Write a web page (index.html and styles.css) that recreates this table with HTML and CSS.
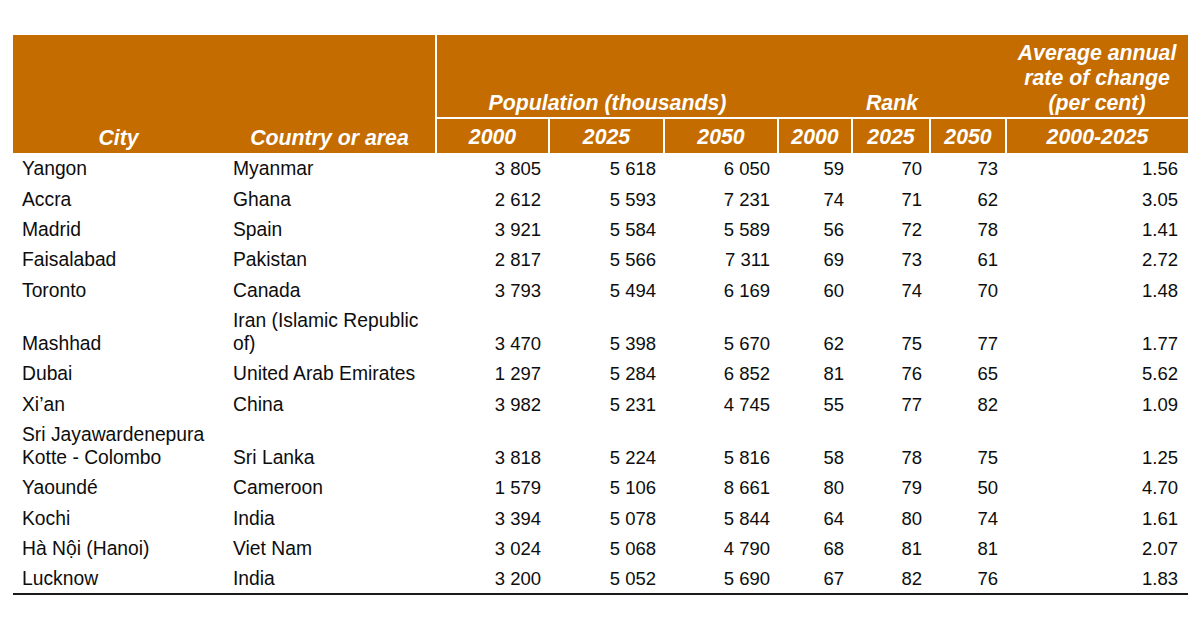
FILE: index.html
```html
<!DOCTYPE html>
<html lang="en">
<head>
<meta charset="utf-8">
<title>Cities</title>
<link rel="stylesheet" href="styles.css">
</head>
<body>
<div class="page">
<table class="data">
  <colgroup>
    <col class="c-city"><col class="c-country">
    <col class="c-pop1"><col class="c-pop2"><col class="c-pop3">
    <col class="c-rk1"><col class="c-rk2"><col class="c-rk3">
    <col class="c-rate">
  </colgroup>
  <thead>
    <tr class="h1">
      <th rowspan="2" class="hc">City</th>
      <th rowspan="2" class="hc">Country or area</th>
      <th colspan="3" class="sep">Population (thousands)</th>
      <th colspan="3">Rank</th>
      <th>Average annual<br>rate of change<br>(per cent)</th>
    </tr>
    <tr class="h2">
      <th class="sep">2000</th><th class="sep">2025</th><th class="sep">2050</th>
      <th class="sep">2000</th><th class="sep">2025</th><th class="sep">2050</th>
      <th class="sep">2000-2025</th>
    </tr>
  </thead>
  <tbody>
    <tr><td>Yangon</td><td>Myanmar</td><td class="n">3 805</td><td class="n">5 618</td><td class="n">6 050</td><td class="n">59</td><td class="n">70</td><td class="n">73</td><td class="n r">1.56</td></tr>
    <tr><td>Accra</td><td>Ghana</td><td class="n">2 612</td><td class="n">5 593</td><td class="n">7 231</td><td class="n">74</td><td class="n">71</td><td class="n">62</td><td class="n r">3.05</td></tr>
    <tr><td>Madrid</td><td>Spain</td><td class="n">3 921</td><td class="n">5 584</td><td class="n">5 589</td><td class="n">56</td><td class="n">72</td><td class="n">78</td><td class="n r">1.41</td></tr>
    <tr><td>Faisalabad</td><td>Pakistan</td><td class="n">2 817</td><td class="n">5 566</td><td class="n">7 311</td><td class="n">69</td><td class="n">73</td><td class="n">61</td><td class="n r">2.72</td></tr>
    <tr><td>Toronto</td><td>Canada</td><td class="n">3 793</td><td class="n">5 494</td><td class="n">6 169</td><td class="n">60</td><td class="n">74</td><td class="n">70</td><td class="n r">1.48</td></tr>
    <tr><td>Mashhad</td><td>Iran (Islamic Republic<br>of)</td><td class="n">3 470</td><td class="n">5 398</td><td class="n">5 670</td><td class="n">62</td><td class="n">75</td><td class="n">77</td><td class="n r">1.77</td></tr>
    <tr><td>Dubai</td><td>United Arab Emirates</td><td class="n">1 297</td><td class="n">5 284</td><td class="n">6 852</td><td class="n">81</td><td class="n">76</td><td class="n">65</td><td class="n r">5.62</td></tr>
    <tr><td>Xi’an</td><td>China</td><td class="n">3 982</td><td class="n">5 231</td><td class="n">4 745</td><td class="n">55</td><td class="n">77</td><td class="n">82</td><td class="n r">1.09</td></tr>
    <tr><td>Sri Jayawardenepura<br>Kotte - Colombo</td><td>Sri Lanka</td><td class="n">3 818</td><td class="n">5 224</td><td class="n">5 816</td><td class="n">58</td><td class="n">78</td><td class="n">75</td><td class="n r">1.25</td></tr>
    <tr><td>Yaoundé</td><td>Cameroon</td><td class="n">1 579</td><td class="n">5 106</td><td class="n">8 661</td><td class="n">80</td><td class="n">79</td><td class="n">50</td><td class="n r">4.70</td></tr>
    <tr><td>Kochi</td><td>India</td><td class="n">3 394</td><td class="n">5 078</td><td class="n">5 844</td><td class="n">64</td><td class="n">80</td><td class="n">74</td><td class="n r">1.61</td></tr>
    <tr><td>Hà Nội (Hanoi)</td><td>Viet Nam</td><td class="n">3 024</td><td class="n">5 068</td><td class="n">4 790</td><td class="n">68</td><td class="n">81</td><td class="n">81</td><td class="n r">2.07</td></tr>
    <tr class="last"><td>Lucknow</td><td>India</td><td class="n">3 200</td><td class="n">5 052</td><td class="n">5 690</td><td class="n">67</td><td class="n">82</td><td class="n">76</td><td class="n r">1.83</td></tr>
  </tbody>
</table>
</div>
</body>
</html>
```

FILE: styles.css
```css
html, body {
  margin: 0;
  padding: 0;
  background: #ffffff;
}
.page {
  padding: 35px 12px 0 13px;
  font-family: "Liberation Sans", Arial, sans-serif;
  color: #0d0d0d;
}
.data {
  width: 1175px;
  table-layout: fixed;
  border-collapse: collapse;
  border-spacing: 0;
}
.c-city { width: 211px; }
.c-country { width: 212px; }
.c-pop1 { width: 113px; }
.c-pop2 { width: 115px; }
.c-pop3 { width: 114px; }
.c-rk1 { width: 74px; }
.c-rk2 { width: 78px; }
.c-rk3 { width: 76px; }
.c-rate { width: 182px; }

.data th {
  background: #c46c00;
  color: #ffffff;
  font-weight: bold;
  font-style: italic;
  font-size: 21.3px;
  line-height: 25px;
  text-align: center;
  vertical-align: bottom;
  padding: 0 4px;
}
.h1 th {
  height: 82px;
  padding-top: 6px;
  padding-bottom: 1px;
  box-sizing: border-box;
}
.h1 th.hc {
  padding-bottom: 2px;
}
.h1 th.sep {
  border-left: 2px solid #ffffff;
}
.h2 th {
  height: 35px;
  padding-top: 5px;
  padding-bottom: 3px;
  box-sizing: border-box;
  border-top: 2px solid #ffffff;
}
.h2 th.sep {
  border-left: 2px solid #ffffff;
}
.data td {
  font-size: 19.3px;
  line-height: 23px;
  padding: 4.3px 8px 3.05px 9px;
  vertical-align: bottom;
  text-align: left;
  white-space: nowrap;
}
.data td.n {
  font-size: 18.5px;
  text-align: right;
  padding-right: 8px;
}
.data td.r {
  padding-right: 10px;
}
.data tr.last td {
  padding-bottom: 2.5px;
  border-bottom: 2px solid #1a1a1a;
}
```
